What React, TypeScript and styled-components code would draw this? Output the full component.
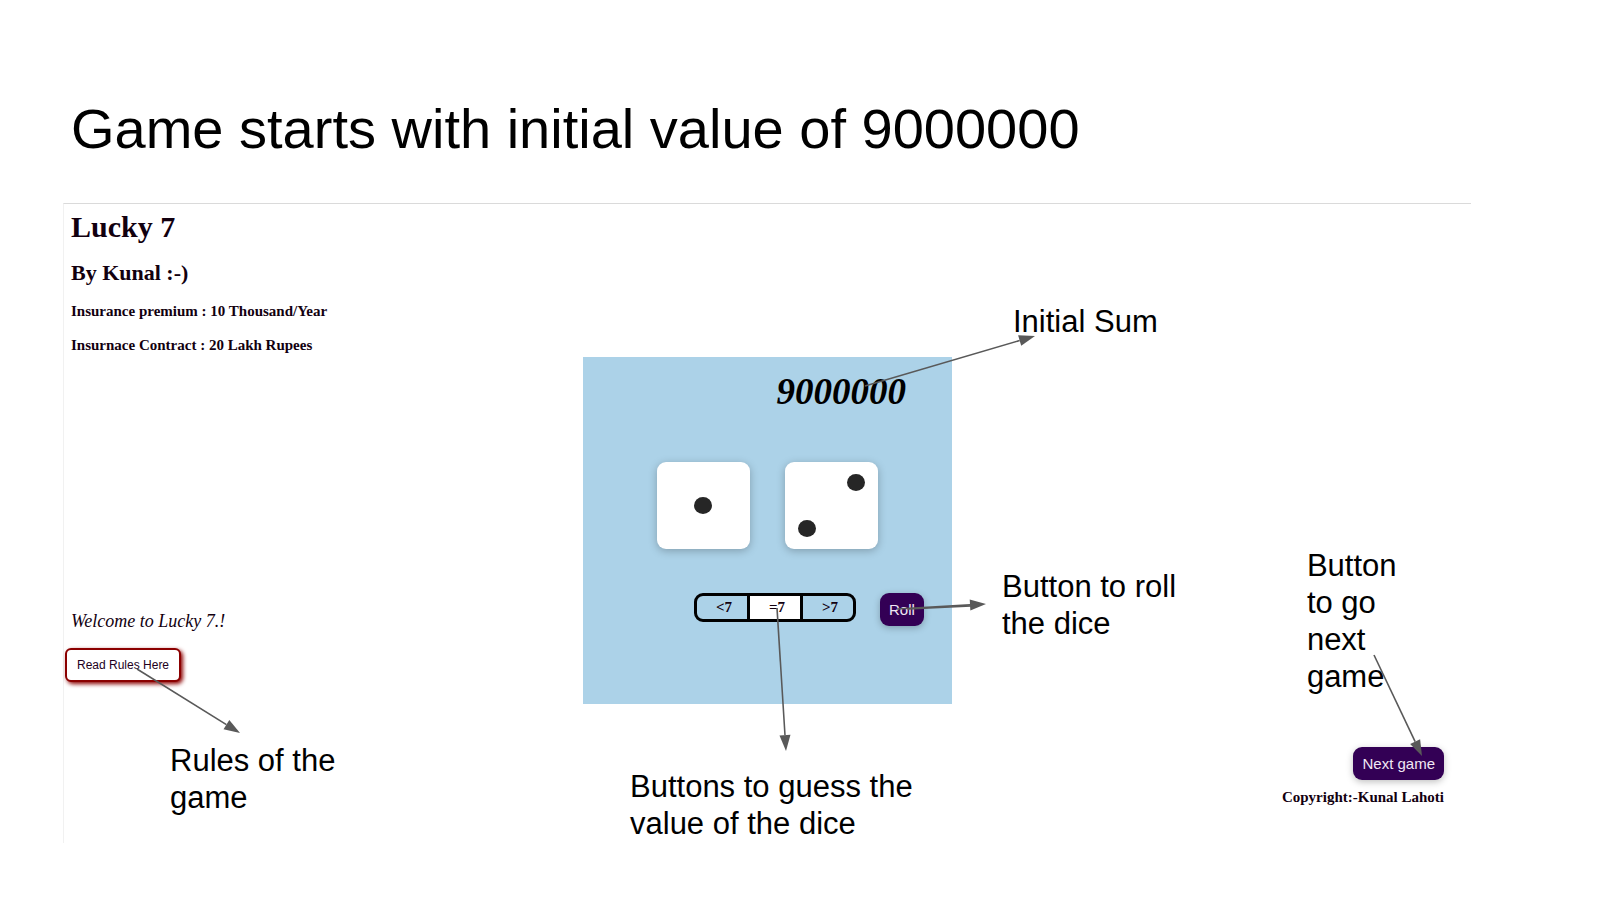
import React, { useState } from "react";
import styled, { createGlobalStyle } from "styled-components";

const GlobalStyle = createGlobalStyle`
  *, *::before, *::after { box-sizing: border-box; }
  body {
    margin: 0;
    background: #fff;
    color: #000;
    font-family: "Liberation Sans", Arial, sans-serif;
  }
  h1, h2, h3, h4, p { margin: 0; }
`;

const serif = `"Liberation Serif", "Times New Roman", serif`;
const ink = "#12000f";
const purple = "#330055";

const Slide = styled.main`
  display: flex;
  flex-direction: column;
  gap: 42px;
  padding: 97px 129px 56px 63px;
`;

const SlideTitle = styled.h1`
  padding-left: 8px;
  font-size: 56px;
  line-height: 64px;
  font-weight: 400;
`;

const Game = styled.section`
  display: grid;
  grid-template-columns: 1fr auto 1fr;
  min-height: 640px;
  border-top: 1px solid #dadada;
  border-left: 1px solid #f1f1f1;
  font-family: ${serif};
  color: ${ink};
`;

const Column = styled.div<{ $end?: boolean }>`
  display: flex;
  flex-direction: column;
  justify-content: ${(p) => (p.$end ? "flex-end" : "space-between")};
  align-items: ${(p) => (p.$end ? "flex-end" : "stretch")};
  padding: ${(p) => (p.$end ? "0 27px 37px 0" : "6px 0 161px")};
`;

const Intro = styled.header`
  display: flex;
  flex-direction: column;
  gap: 16px;
  padding-left: 7px;
`;

const GameName = styled.h2`
  font-size: 30px;
  line-height: 34px;
`;

const Author = styled.h3`
  font-size: 22px;
  line-height: 26px;
`;

const Note = styled.h4`
  font-size: 15px;
  line-height: 18px;
`;

const Rules = styled.div`
  position: relative;
  display: flex;
  flex-direction: column;
  align-items: flex-start;
  gap: 17px;
  padding-left: 1px;
`;

const Welcome = styled.p`
  padding-left: 6px;
  font-size: 18px;
  line-height: 20px;
  font-style: italic;
`;

const RulesButton = styled.button`
  height: 34px;
  padding: 0 10px;
  border: 2px solid #8b0000;
  border-radius: 6px;
  background: #fff;
  box-shadow: 2px 2px 4px #8b0000;
  color: #22001c;
  font-family: "Liberation Sans", Arial, sans-serif;
  font-size: 12px;
`;

const Board = styled.div`
  position: relative;
  align-self: start;
  width: 369px;
  height: 347px;
  margin-top: 153px;
  padding: 14px 46px 0 74px;
  background: #acd2e8;
`;

const Sum = styled.output`
  display: block;
  text-align: right;
  font-size: 37px;
  line-height: 42px;
  font-weight: 700;
  font-style: italic;
  color: #000;
`;

const DiceRow = styled.div`
  display: flex;
  gap: 35px;
  padding-top: 49px;
`;

const Die = styled.div`
  display: grid;
  grid-template: repeat(3, 1fr) / repeat(3, 1fr);
  place-items: center;
  width: 93px;
  height: 87px;
  padding: 9px 10px;
  border-radius: 9px;
  background: #fff;
  box-shadow: 0 2px 9px rgba(0, 0, 0, 0.25);
`;

const Pip = styled.span<{ $row: number; $col: number }>`
  grid-area: ${(p) => p.$row} / ${(p) => p.$col};
  width: 18px;
  height: 17px;
  border-radius: 50%;
  background: #262626;
`;

const Controls = styled.div`
  display: flex;
  gap: 24px;
  padding: 44px 0 0 37px;
`;

const Guesses = styled.div`
  display: flex;
  width: 162px;
  height: 29px;
  flex: none;
  border: 3px solid #000;
  border-radius: 9px;
  overflow: hidden;
`;

const Guess = styled.button<{ $on: boolean }>`
  flex: 1;
  padding: 0 0 0 4px;
  border: 0;
  background: ${(p) => (p.$on ? "#fff" : "transparent")};
  color: ${ink};
  font: 700 15px ${serif};

  & + & { border-left: 3px solid #000; }
`;

const ActionButton = styled.button`
  flex: none;
  height: 33px;
  padding: 0 9px;
  border: 0;
  border-radius: 9px;
  background: ${purple};
  box-shadow: 0 2px 7px rgba(0, 0, 0, 0.25);
  color: #f1e8f4;
  font-family: "Liberation Sans", Arial, sans-serif;
  font-size: 15px;
`;

const NextArea = styled.footer`
  position: relative;
  display: flex;
  flex-direction: column;
  align-items: flex-end;
  gap: 8px;
`;

/* Callouts lie over the game and are anchored to the part they explain. */
const Label = styled.p<{ $x: number; $y: number; $w: number }>`
  position: absolute;
  left: ${(p) => p.$x}px;
  top: ${(p) => p.$y}px;
  width: ${(p) => p.$w}px;
  color: #000;
  font-family: "Liberation Sans", Arial, sans-serif;
  font-size: 31px;
  line-height: 37px;
`;

const Overlay = styled.svg`
  position: absolute;
  top: 0;
  left: 0;
  width: 1px;
  height: 1px;
  overflow: visible;
  pointer-events: none;
`;

type Point = [number, number];

function Arrow({ from, to }: { from: Point; to: Point }) {
  const length = Math.hypot(to[0] - from[0], to[1] - from[1]);
  const ux = (to[0] - from[0]) / length;
  const uy = (to[1] - from[1]) / length;
  const bx = to[0] - ux * 16;
  const by = to[1] - uy * 16;
  const half = 5.5;
  return (
    <g stroke="#595959" fill="#595959">
      <line x1={from[0]} y1={from[1]} x2={bx} y2={by} strokeWidth="1.6" />
      <polygon
        stroke="none"
        points={`${to[0]},${to[1]} ${bx - uy * half},${by + ux * half} ${bx + uy * half},${by - ux * half}`}
      />
    </g>
  );
}

const guesses = ["<7", "=7", ">7"];

export default function App() {
  const [guess, setGuess] = useState("=7");
  return (
    <>
      <GlobalStyle />
      <Slide>
        <SlideTitle>Game starts with initial value of 9000000</SlideTitle>
        <Game>
          <Column>
            <Intro>
              <GameName>Lucky 7</GameName>
              <Author>By Kunal :-)</Author>
              <Note>Insurance premium : 10 Thousand/Year</Note>
              <Note>Insurnace Contract : 20 Lakh Rupees</Note>
            </Intro>
            <Rules>
              <Welcome>Welcome to Lucky 7.!</Welcome>
              <RulesButton type="button">Read Rules Here</RulesButton>
              <Label $x={106} $y={131} $w={190}>Rules of the game</Label>
              <Overlay aria-hidden="true">
                <Arrow from={[73, 58]} to={[176, 122]} />
              </Overlay>
            </Rules>
          </Column>

          <Board>
            <Sum>9000000</Sum>
            <DiceRow>
              <Die role="img" aria-label="One">
                <Pip $row={2} $col={2} />
              </Die>
              <Die role="img" aria-label="Two">
                <Pip $row={1} $col={3} />
                <Pip $row={3} $col={1} />
              </Die>
            </DiceRow>
            <Controls>
              <Guesses role="group" aria-label="Guess">
                {guesses.map((g) => (
                  <Guess key={g} type="button" $on={g === guess} aria-pressed={g === guess} onClick={() => setGuess(g)}>
                    {g}
                  </Guess>
                ))}
              </Guesses>
              <ActionButton type="button">Roll</ActionButton>
            </Controls>
            <Label $x={430} $y={-54} $w={180}>Initial Sum</Label>
            <Label $x={419} $y={211} $w={200}>Button to roll the dice</Label>
            <Label $x={47} $y={411} $w={310}>Buttons to guess the value of the dice</Label>
            <Overlay aria-hidden="true">
              <Arrow from={[282, 29]} to={[452, -21]} />
              <Arrow from={[194, 251]} to={[203, 394]} />
              <Arrow from={[314, 252]} to={[403, 247]} />
              <line x1="325" y1="252" x2="388" y2="249" stroke="#595959" strokeWidth="1.6" />
            </Overlay>
          </Board>

          <Column $end>
            <NextArea>
              <ActionButton type="button">Next game</ActionButton>
              <Note>Copyright:-Kunal Lahoti</Note>
              <Label $x={25} $y={-200} $w={110}>Button to go next game</Label>
              <Overlay aria-hidden="true">
                <Arrow from={[92, -92]} to={[140, 9]} />
              </Overlay>
            </NextArea>
          </Column>
        </Game>
      </Slide>
    </>
  );
}
